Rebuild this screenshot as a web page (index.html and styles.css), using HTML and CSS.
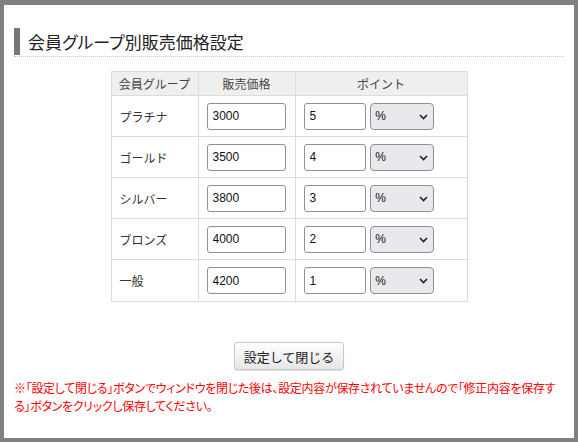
FILE: index.html
```html
<!DOCTYPE html>
<html>
<head>
  <meta charset="utf-8">
  <title>会員グループ別販売価格設定</title>
  <link rel="stylesheet" href="styles.css">
</head>
<body>
  <div class="dialog">
    <div class="title-wrap">
      <h2 class="title">会員グループ別販売価格設定</h2>
    </div>

    <table class="price-table">
      <colgroup>
        <col class="col-group">
        <col class="col-price">
        <col class="col-point">
      </colgroup>
      <thead>
        <tr>
          <th>会員グループ</th>
          <th>販売価格</th>
          <th>ポイント</th>
        </tr>
      </thead>
      <tbody>
        <tr>
          <td>プラチナ</td>
          <td><input type="text" class="price" value="3000"></td>
          <td class="point-cell">
            <input type="text" class="point" value="5">
            <span class="select-wrap">
              <select class="unit"><option>%</option><option>pt</option></select>
              <svg class="chev" width="9" height="6" viewBox="0 0 9 6"><path d="M1 1 L4.5 4.5 L8 1" fill="none" stroke="#222" stroke-width="1.6"/></svg>
            </span>
          </td>
        </tr>
        <tr>
          <td>ゴールド</td>
          <td><input type="text" class="price" value="3500"></td>
          <td class="point-cell">
            <input type="text" class="point" value="4">
            <span class="select-wrap">
              <select class="unit"><option>%</option><option>pt</option></select>
              <svg class="chev" width="9" height="6" viewBox="0 0 9 6"><path d="M1 1 L4.5 4.5 L8 1" fill="none" stroke="#222" stroke-width="1.6"/></svg>
            </span>
          </td>
        </tr>
        <tr>
          <td>シルバー</td>
          <td><input type="text" class="price" value="3800"></td>
          <td class="point-cell">
            <input type="text" class="point" value="3">
            <span class="select-wrap">
              <select class="unit"><option>%</option><option>pt</option></select>
              <svg class="chev" width="9" height="6" viewBox="0 0 9 6"><path d="M1 1 L4.5 4.5 L8 1" fill="none" stroke="#222" stroke-width="1.6"/></svg>
            </span>
          </td>
        </tr>
        <tr>
          <td>ブロンズ</td>
          <td><input type="text" class="price" value="4000"></td>
          <td class="point-cell">
            <input type="text" class="point" value="2">
            <span class="select-wrap">
              <select class="unit"><option>%</option><option>pt</option></select>
              <svg class="chev" width="9" height="6" viewBox="0 0 9 6"><path d="M1 1 L4.5 4.5 L8 1" fill="none" stroke="#222" stroke-width="1.6"/></svg>
            </span>
          </td>
        </tr>
        <tr>
          <td>一般</td>
          <td><input type="text" class="price" value="4200"></td>
          <td class="point-cell">
            <input type="text" class="point" value="1">
            <span class="select-wrap">
              <select class="unit"><option>%</option><option>pt</option></select>
              <svg class="chev" width="9" height="6" viewBox="0 0 9 6"><path d="M1 1 L4.5 4.5 L8 1" fill="none" stroke="#222" stroke-width="1.6"/></svg>
            </span>
          </td>
        </tr>
      </tbody>
    </table>

    <div class="actions">
      <button type="button" class="btn">設定して閉じる</button>
    </div>

    <p class="note">※「設定して閉じる」ボタンでウィンドウを閉じた後は、設定内容が保存されていませんので「修正内容を保存する」ボタンをクリックし保存してください。</p>
  </div>
</body>
</html>
```

FILE: styles.css
```css
html, body { margin: 0; height: 100%; }
body { background: #808080; overflow: hidden; font-family: "Noto Sans CJK JP", "Liberation Sans", sans-serif; color: #333; }

.dialog { box-sizing: border-box; width: 570px; height: 433px; margin: 5px 0 0 4px; padding: 23px 10px 0; background: #fff; }

.title-wrap { border-bottom: 1px dotted #c4c4c4; padding-bottom: 1px; }
.title { margin: 0; height: 27px; line-height: 27px; border-left: 6px solid #777; padding-left: 8px;
         font-size: 17px; font-weight: normal; color: #222; font-feature-settings: "palt"; }

.price-table { border-collapse: collapse; table-layout: fixed; width: 356px; margin: 14px auto 0; font-size: 12px; }
.col-group { width: 87px; }
.col-price { width: 97px; }
.col-point { width: 172px; }
.price-table th, .price-table td { border: 1px solid #dcdcdc; }
.price-table th { height: 23px; padding: 0; background: #efefef; font-weight: normal; color: #444; }
.price-table td { height: 40px; padding: 0 8px; color: #333; }
.price-table tbody tr:last-child td { height: 41px; }

input[type=text] { box-sizing: border-box; height: 27px; padding: 0 5px; border: 1px solid #8f8f9d; border-radius: 3px;
                   font-family: "Liberation Sans", sans-serif; font-size: 12px; color: #111; vertical-align: middle; }
.price { width: 79px; }
.point { width: 62px; }
.point-cell { white-space: nowrap; }

.select-wrap { position: relative; display: inline-block; vertical-align: middle; margin-left: 2px; }
.unit { appearance: none; -webkit-appearance: none; box-sizing: border-box; width: 64px; height: 27px; padding: 0 4px;
        border: 1px solid #8f8f9d; border-radius: 4px; background: #e9e9ed; font-family: "Liberation Sans", sans-serif;
        font-size: 12px; color: #111; display: block; }
.chev { position: absolute; right: 6px; top: 11px; pointer-events: none; }

.actions { text-align: center; margin-top: 40px; }
.btn { box-sizing: border-box; width: 110px; height: 28px; border: 1px solid #c8c8c8; border-radius: 3px;
       background: linear-gradient(#ffffff, #e6e6e6); box-shadow: 0 1px 1px rgba(0,0,0,0.12);
       font-family: "Noto Sans CJK JP", sans-serif; font-size: 13px; color: #222; padding: 0; }

.note { margin: 9px 0 0; color: #f00; font-size: 12px; line-height: 18px; letter-spacing: -0.3px; font-feature-settings: "palt"; }
```
